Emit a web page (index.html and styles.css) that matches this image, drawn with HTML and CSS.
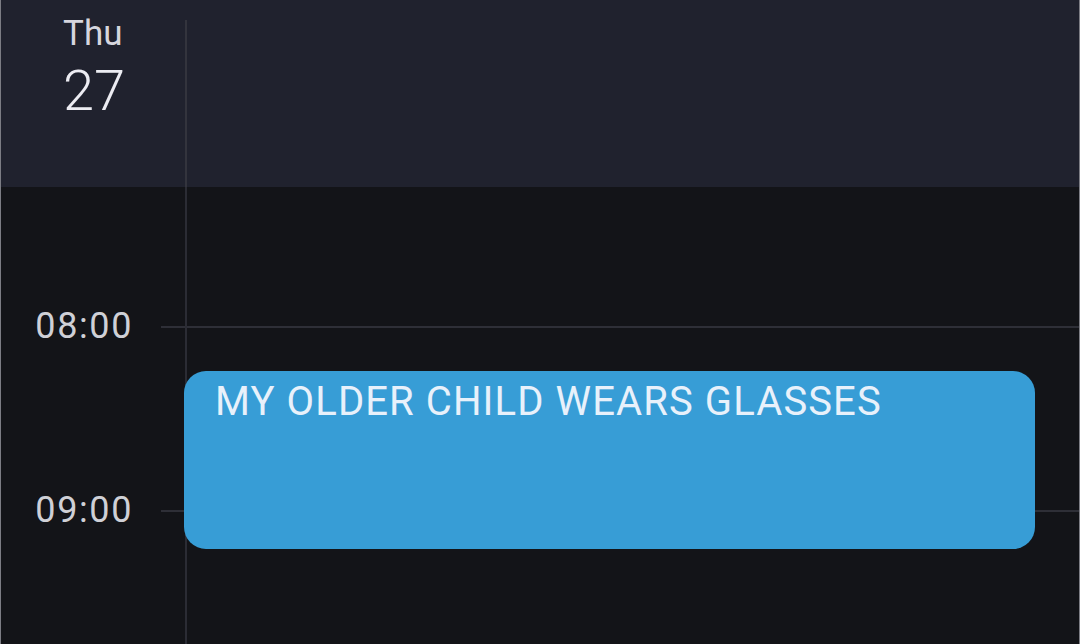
FILE: index.html
```html
<!DOCTYPE html>
<html lang="en">
<head>
<meta charset="UTF-8" />
<meta name="viewport" content="width=device-width, initial-scale=1" />
<title>Calendar - Thu 27</title>
<link rel="stylesheet" href="styles.css">
</head>
<body>
  <div class="calendar">
    <div class="cal-header">
      <div class="day-label">
        <span class="day-name">Thu</span>
        <span class="day-num">27</span>
      </div>
      <div class="day-head-col"></div>
    </div>

    <div class="cal-body">
      <div class="hour">
        <span class="hour-label">08:00</span>
        <span class="hour-line"></span>
      </div>
      <div class="hour">
        <span class="hour-label">09:00</span>
        <span class="hour-line"></span>
      </div>

      <!-- event: 08:15 - 09:13 -->
      <div class="event">
        <span class="event-title">MY OLDER CHILD WEARS GLASSES</span>
      </div>
    </div>
  </div>
</body>
</html>
```

FILE: styles.css
```css
body {
  margin: 0;
  background: #131418;
  font-family: Roboto, "Liberation Sans", sans-serif;
}

.calendar {
  width: 1080px;
  height: 644px;
  overflow: hidden;
  box-sizing: border-box;
  border-left: 1px solid #7c7d84;
  border-right: 1px solid #7c7d84;
}

/* Header com o dia */
.cal-header {
  display: grid;
  grid-template-columns: 184px 1fr;
  height: 187px;
  background: #20222e;
}

.day-label {
  display: flex;
  flex-direction: column;
  padding: 14px 0 0 62px;
  color: #d6d6de;
}

.day-name {
  font-size: 35px;
  line-height: 40px;
}

.day-num {
  margin-top: 5px;
  font-size: 56px;
  line-height: 64px;
  font-weight: 300;
  color: #ececf2;
}

.day-head-col {
  margin-top: 20px;
  border-left: 2px solid #33343d;
}

/* Corpo com as horas */
.cal-body {
  position: relative;
  height: 457px;
  padding-top: 139px;
  box-sizing: border-box;
}

.cal-body::before {
  content: "";
  position: absolute;
  top: 0;
  bottom: 0;
  left: 184px;
  width: 2px;
  background: #2b2c34;
}

.hour {
  display: grid;
  grid-template-columns: 160px 1fr;
  height: 184px;
}

.hour-label {
  margin-top: -20px;
  padding-right: 28px;
  height: 40px;
  line-height: 40px;
  text-align: right;
  font-size: 36px;
  letter-spacing: 1.6px;
  color: #cfd0d6;
}

.hour-line {
  border-top: 2px solid #2e2f37;
}

.event {
  position: absolute;
  top: 184px;
  left: 183px;
  width: 851px;
  height: 178px;
  box-sizing: border-box;
  padding: 7px 0 0 31px;
  background: #379dd6;
  border-radius: 22px;
}

.event-title {
  font-size: 40px;
  line-height: 48px;
  letter-spacing: 1.1px;
  color: #e8f1fb;
}
```
